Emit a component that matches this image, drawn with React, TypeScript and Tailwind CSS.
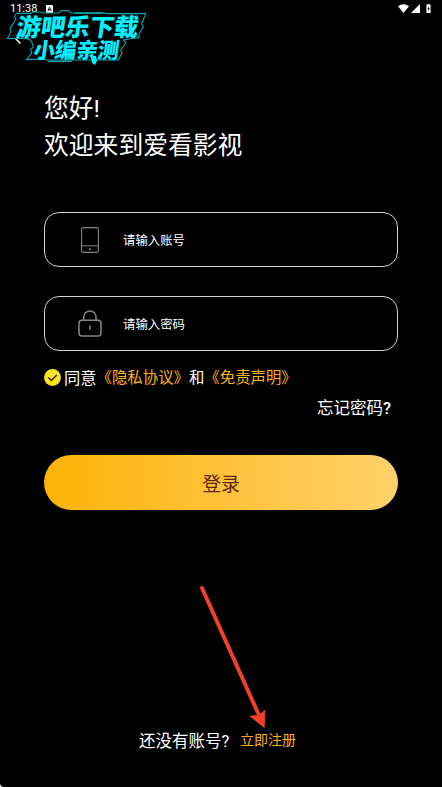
import React from "react";

function StatusBar() {
  return (
    <header className="flex h-[18px] items-center justify-between pr-[8px] pl-[10px]">
      <div className="flex items-center gap-[9px]">
        <span className="font-['Roboto',sans-serif] text-[11px] leading-[18px]">11:38</span>
        <svg width="7" height="8" viewBox="0 0 7 8">
          <rect width="7" height="8" rx="0.8" fill="#fff" />
          <path d="M1.8 6 3.5 2.2 5.2 6M2.4 4.8h2.2" stroke="#000" strokeWidth="0.9" fill="none" />
        </svg>
      </div>
      <svg width="36" height="12" viewBox="0 0 36 12" fill="#fff">
        <path d="M0 3.2Q5.5-0.8 11 3.2L5.5 10z" />
        <path d="M13 10 22 1v9z" />
        <path d="M28.4 1.8h1.1V1h2v.8h1.1V10h-4.2z" />
        <path d="M31 3.2 29.4 6.3h1v2l1.5-3h-1z" fill="#000" />
      </svg>
    </header>
  );
}

function Watermark() {
  return (
    <div className="absolute top-0 left-0 h-[75px] w-[160px] font-['Noto_Sans_CJK_SC',sans-serif] font-black whitespace-nowrap text-[#00f0ff]">
      <svg className="absolute inset-0" width="160" height="75" viewBox="0 0 480 225" fill="none">
        <path
          d="M49 40H92L98 36H122L128 39H175L184 32H205L213 39H310L318 41H437L425 72 430 80 418 100 416 113 385 117 370 120 378 128 362 150 366 158 355 180H140L130 178H80L95 160 92 148 100 142 95 125 88 118 75 115H22L33 95 30 85 48 58 44 50Z"
          stroke="#08a3b2"
          strokeWidth="3.4"
        />
        <path d="M225 39H310M145 184H215" stroke="#10d4e0" strokeWidth="3" />
        <path d="M272 168H288L291 182 285 195 277 190Z" fill="#00f0ff" />
      </svg>
      <div className="absolute top-[13px] left-[17px] -skew-x-8 text-[24.4px] leading-[25px]">游吧乐下载</div>
      <div className="absolute top-[38px] left-[34px] -skew-x-8 text-[21.4px] leading-[21px]">小编亲测</div>
    </div>
  );
}

function PhoneIcon() {
  return (
    <svg width="18" height="26" viewBox="0 0 18 26" fill="none" stroke="#858585">
      <rect x="0.6" y="0.6" width="16.8" height="24.8" rx="1.6" strokeWidth="1.1" />
      <path d="M1 18.9h16" />
      <path d="M7.8 22.1h2.4M9 20.9v2.4" />
    </svg>
  );
}

function LockIcon() {
  return (
    <svg width="24" height="27" viewBox="0 0 24 27" fill="none" stroke="#858585" strokeWidth="1.5">
      <rect x="1" y="10.2" width="22" height="15.8" rx="3" />
      <path d="M5.7 10V7.2a6.2 6.2 0 0 1 12.4 0V10M12 15.5v4.6" />
    </svg>
  );
}

function Field({ icon, label }: { icon: React.ReactNode; label: string }) {
  return (
    <div className="flex h-[55px] items-center rounded-[15px] border border-[#d0d0d0] pl-[33px]">
      <div className="flex w-[24px] justify-center">{icon}</div>
      <span className="ml-[21px] pt-[2px] text-[12.4px] leading-[18px]">{label}</span>
    </div>
  );
}

export default function App() {
  return (
    <div
      lang="zh-CN"
      className="relative flex h-[787px] w-[442px] flex-col overflow-hidden bg-black font-['Roboto','Noto_Sans_CJK_SC',sans-serif] text-white"
    >
      <StatusBar />
      <nav className="flex h-[42px] items-center pl-[15px]">
        <svg width="7" height="10" viewBox="0 0 7 10" fill="none" stroke="#fff" strokeWidth="1.5">
          <path d="M5.5 0.5 1 5l4.5 4.5" />
        </svg>
      </nav>
      <main className="flex flex-1 flex-col px-[44px]">
        <h1 className="mt-[30px] text-[24.8px] leading-[37px] font-normal">
          您好!
          <br />
          欢迎来到爱看影视
        </h1>
        <div className="mt-[48px] flex flex-col gap-[29px]">
          <Field icon={<PhoneIcon />} label="请输入账号" />
          <Field icon={<LockIcon />} label="请输入密码" />
        </div>
        <div className="mt-[15px] flex h-[24px] items-center text-[15.4px] whitespace-nowrap">
          <svg className="-mt-[2px]" width="17" height="17" viewBox="0 0 17 17" fill="none">
            <circle cx="8.5" cy="8.5" r="8.4" fill="#fde326" />
            <path d="m4.4 8.5 3 2.9 5.4-5.5" stroke="#262415" strokeWidth="1.4" />
          </svg>
          <span className="ml-[3px] pt-[2px] text-[16.3px]">同意</span>
          <span className="pt-[2px] text-[#fcb01c]">《隐私协议》</span>
          <span className="pt-[2px]">和</span>
          <span className="pt-[2px] text-[#fcb01c]">《免责声明》</span>
        </div>
        <div className="mt-[7px] mr-[7px] text-right text-[16.5px] leading-[24px]">
          忘记密码<span className="font-medium">?</span>
        </div>
        <button className="mt-[34px] h-[55px] rounded-full bg-linear-to-r/srgb from-[#fdb207] to-[#ffd16b] pt-[5px] text-[18.8px] text-[#5c2613]">
          登录
        </button>
        <div className="mt-auto mb-[34px] flex h-[26px] items-center pl-[95px] whitespace-nowrap">
          <span className="w-[101px] pt-[4px] text-[16.5px]">还没有账号?</span>
          <span className="pt-px text-[14px] text-[#fcb01c]">立即注册</span>
        </div>
      </main>
      <Watermark />
      <svg className="absolute top-[584px] left-[196px]" width="76" height="148" viewBox="0 0 76 148">
        <path d="m6 4 56 125" stroke="#f04128" strokeWidth="4" strokeLinecap="round" />
        <path d="M68.2 143.5 54 132.2l7-.7 4-2 4-3.3z" fill="#f04128" stroke="#f04128" strokeWidth="0.8" />
      </svg>
      <svg className="absolute bottom-0 left-0" width="3" height="3" viewBox="0 0 3 3">
        <path d="M0 0Q0.5 2.5 3 3H0z" fill="#fff" />
      </svg>
    </div>
  );
}
